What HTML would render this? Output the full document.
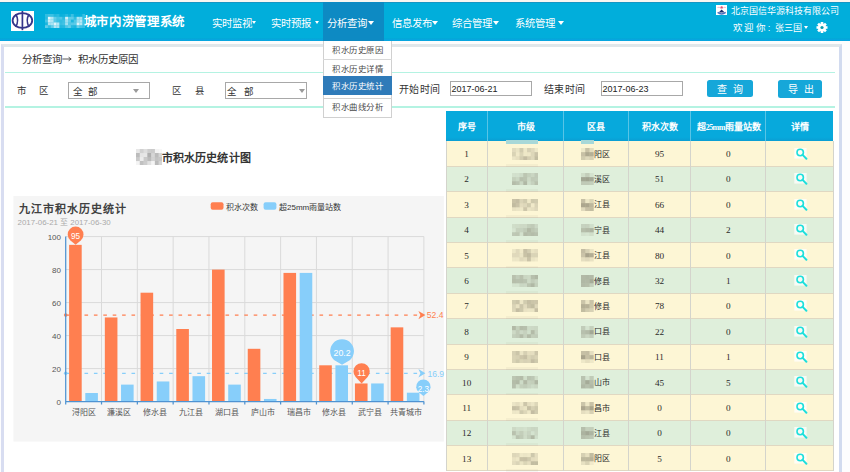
<!DOCTYPE html>
<html lang="zh-CN">
<head>
<meta charset="utf-8">
<style>
*{box-sizing:border-box;margin:0;padding:0}
html,body{width:850px;height:472px;overflow:hidden;background:#fdfdfe;font-family:"Liberation Sans",sans-serif;position:relative}
.a{position:absolute}
#top{left:0;top:0;width:850px;height:2px;background:#f9f6f1}
#hdr{left:0;top:2px;width:850px;height:38.8px;background:linear-gradient(#01aedb 0,#01aedb 34.8px,#03a9d6 35.2px,#07a4e2 37px,#04aad8 38.8px);border-top:1px solid #1596c4}
#logo{left:11px;top:10.8px;width:23px;height:20.1px;background:#fff;overflow:hidden}
.blur{position:absolute}
#ttl{left:45.8px;top:14px;letter-spacing:0.65px;font-size:12.45px;font-weight:bold;color:#fff;line-height:16px;white-space:nowrap}
.nav{position:absolute;top:16.6px;font-size:10.4px;line-height:14px;color:#fff;white-space:nowrap}
.car{display:inline-block;width:0;height:0;border-left:2.5px solid transparent;border-right:2.5px solid transparent;border-top:3px solid #fff;vertical-align:middle;margin-left:0.6px;margin-top:-2px}
.car2{border-left:3px solid transparent;border-right:3px solid transparent;border-top:4px solid #fff}
#act{left:323.2px;top:2px;width:60.4px;height:38.8px;background:#0d8ac3}
#comp{left:731px;top:4.5px;font-size:9px;line-height:12px;color:#fff;white-space:nowrap}
#user{left:732.5px;top:22px;font-size:9.5px;line-height:12px;color:#fff;white-space:nowrap}
#gap{left:0;top:40.8px;width:850px;height:3px;background:#fdfdfd}
#panel{left:1.3px;top:43.6px;width:840.5px;height:440px;background:#fff;border-left:3.7px solid #d8ddf1;border-right:3.7px solid #d2dbef;border-top:3.2px solid #e0e7ea}
#crumb{left:21.5px;top:51.5px;font-size:10.5px;line-height:14px;color:#333;white-space:nowrap}
.hl{position:absolute;height:1.5px;background:#b4f3e2}
.lbl{position:absolute;font-size:10px;line-height:14px;color:#333;white-space:nowrap}
.sel{position:absolute;height:16.4px;border:1px solid #a8a8a8;background:#fff;font-size:9.5px;line-height:17px;color:#333;padding-left:5.5px;letter-spacing:6.2px}
.sel i{position:absolute;right:0.6px;top:5.4px;width:0;height:0;border-left:3px solid transparent;border-right:3px solid transparent;border-top:4.5px solid #9a9a9a}
.inp{position:absolute;height:15px;border:1px solid #a8a8a8;background:#fff;font-size:9px;line-height:14.8px;color:#222;padding-left:0;text-indent:0.4px}
.btn{position:absolute;background:#16a7d9;border-radius:2.5px;color:#fff;font-size:10px;text-align:center;letter-spacing:6px;text-indent:6px}
#dd{left:323.3px;top:40.6px;width:69.2px;height:77px}
.ddi{position:absolute;left:0;width:69.2px;font-size:8.4px;letter-spacing:0.5px;text-indent:-0.5px;line-height:14px;height:14px;color:#4a4a4a;text-align:center;white-space:nowrap}
.th{position:absolute;color:#fff;font-weight:bold;font-size:9px;padding-top:2px;padding-left:1px;text-align:center;white-space:nowrap;font-family:"Liberation Serif",serif}
.td{position:absolute;color:#2a2a2a;font-size:9.2px;padding-top:0.5px;text-align:center;white-space:nowrap;font-family:"Liberation Serif",serif}
.mz{display:inline-block;height:12px;vertical-align:middle;background:#c9c4b0;opacity:.7;margin-top:-2px}
.mag{display:inline-block;width:12px;height:12px;background:#fff;vertical-align:middle;margin-top:-2px}
.mag svg{display:block}
</style>
</head>
<body>
<div class="a" id="top"></div>
<div class="a" id="hdr"></div>
<div class="a" id="act"></div>
<div class="a" id="logo"><svg style="display:block" width="23" height="20.2" viewBox="0 0 23 20.2"><ellipse cx="11.4" cy="9.5" rx="9.8" ry="7.4" fill="none" stroke="#36368a" stroke-width="1.8"/><path d="M4.6 3Q8.6 9.5 4.6 16M18.2 3Q14.2 9.5 18.2 16" fill="none" stroke="#36368a" stroke-width="1.6"/><path d="M11.4 -0.3V19.2" stroke="#36368a" stroke-width="1.7"/></svg></div>
<svg class="a" style="left:44.8px;top:14px" width="40.18" height="14.00"><rect x="0.00" y="0.00" width="2.91" height="2.84" fill="#ffffff" fill-opacity="0.19"/><rect x="2.87" y="0.00" width="2.91" height="2.84" fill="#ffffff" fill-opacity="0.24"/><rect x="5.74" y="0.00" width="2.91" height="2.84" fill="#ffffff" fill-opacity="0.23"/><rect x="8.61" y="0.00" width="2.91" height="2.84" fill="#ffffff" fill-opacity="0.12"/><rect x="11.48" y="0.00" width="2.91" height="2.84" fill="#ffffff" fill-opacity="0.16"/><rect x="14.35" y="0.00" width="2.91" height="2.84" fill="#ffffff" fill-opacity="0.03"/><rect x="17.22" y="0.00" width="2.91" height="2.84" fill="#ffffff" fill-opacity="0.06"/><rect x="20.09" y="0.00" width="2.91" height="2.84" fill="#ffffff" fill-opacity="0.14"/><rect x="22.96" y="0.00" width="2.91" height="2.84" fill="#ffffff" fill-opacity="0.05"/><rect x="25.83" y="0.00" width="2.91" height="2.84" fill="#ffffff" fill-opacity="0.23"/><rect x="28.70" y="0.00" width="2.91" height="2.84" fill="#ffffff" fill-opacity="0.04"/><rect x="31.57" y="0.00" width="2.91" height="2.84" fill="#ffffff" fill-opacity="0.03"/><rect x="34.44" y="0.00" width="2.91" height="2.84" fill="#ffffff" fill-opacity="0.03"/><rect x="37.31" y="0.00" width="2.91" height="2.84" fill="#ffffff" fill-opacity="0.22"/><rect x="0.00" y="2.80" width="2.91" height="2.84" fill="#ffffff" fill-opacity="0.16"/><rect x="2.87" y="2.80" width="2.91" height="2.84" fill="#ffffff" fill-opacity="0.89"/><rect x="5.74" y="2.80" width="2.91" height="2.84" fill="#ffffff" fill-opacity="0.69"/><rect x="8.61" y="2.80" width="2.91" height="2.84" fill="#ffffff" fill-opacity="0.39"/><rect x="11.48" y="2.80" width="2.91" height="2.84" fill="#ffffff" fill-opacity="0.26"/><rect x="14.35" y="2.80" width="2.91" height="2.84" fill="#ffffff" fill-opacity="0.30"/><rect x="17.22" y="2.80" width="2.91" height="2.84" fill="#ffffff" fill-opacity="0.16"/><rect x="20.09" y="2.80" width="2.91" height="2.84" fill="#ffffff" fill-opacity="0.81"/><rect x="22.96" y="2.80" width="2.91" height="2.84" fill="#ffffff" fill-opacity="0.39"/><rect x="25.83" y="2.80" width="2.91" height="2.84" fill="#ffffff" fill-opacity="0.37"/><rect x="28.70" y="2.80" width="2.91" height="2.84" fill="#ffffff" fill-opacity="0.19"/><rect x="31.57" y="2.80" width="2.91" height="2.84" fill="#ffffff" fill-opacity="0.65"/><rect x="34.44" y="2.80" width="2.91" height="2.84" fill="#ffffff" fill-opacity="0.62"/><rect x="37.31" y="2.80" width="2.91" height="2.84" fill="#ffffff" fill-opacity="0.19"/><rect x="0.00" y="5.60" width="2.91" height="2.84" fill="#ffffff" fill-opacity="0.28"/><rect x="2.87" y="5.60" width="2.91" height="2.84" fill="#ffffff" fill-opacity="0.80"/><rect x="5.74" y="5.60" width="2.91" height="2.84" fill="#ffffff" fill-opacity="0.69"/><rect x="8.61" y="5.60" width="2.91" height="2.84" fill="#ffffff" fill-opacity="0.35"/><rect x="11.48" y="5.60" width="2.91" height="2.84" fill="#ffffff" fill-opacity="0.24"/><rect x="14.35" y="5.60" width="2.91" height="2.84" fill="#ffffff" fill-opacity="0.19"/><rect x="17.22" y="5.60" width="2.91" height="2.84" fill="#ffffff" fill-opacity="0.24"/><rect x="20.09" y="5.60" width="2.91" height="2.84" fill="#ffffff" fill-opacity="0.62"/><rect x="22.96" y="5.60" width="2.91" height="2.84" fill="#ffffff" fill-opacity="0.39"/><rect x="25.83" y="5.60" width="2.91" height="2.84" fill="#ffffff" fill-opacity="0.11"/><rect x="28.70" y="5.60" width="2.91" height="2.84" fill="#ffffff" fill-opacity="0.32"/><rect x="31.57" y="5.60" width="2.91" height="2.84" fill="#ffffff" fill-opacity="0.61"/><rect x="34.44" y="5.60" width="2.91" height="2.84" fill="#ffffff" fill-opacity="0.71"/><rect x="37.31" y="5.60" width="2.91" height="2.84" fill="#ffffff" fill-opacity="0.27"/><rect x="0.00" y="8.40" width="2.91" height="2.84" fill="#ffffff" fill-opacity="0.10"/><rect x="2.87" y="8.40" width="2.91" height="2.84" fill="#ffffff" fill-opacity="0.65"/><rect x="5.74" y="8.40" width="2.91" height="2.84" fill="#ffffff" fill-opacity="0.66"/><rect x="8.61" y="8.40" width="2.91" height="2.84" fill="#ffffff" fill-opacity="0.88"/><rect x="11.48" y="8.40" width="2.91" height="2.84" fill="#ffffff" fill-opacity="0.70"/><rect x="14.35" y="8.40" width="2.91" height="2.84" fill="#ffffff" fill-opacity="0.21"/><rect x="17.22" y="8.40" width="2.91" height="2.84" fill="#ffffff" fill-opacity="0.26"/><rect x="20.09" y="8.40" width="2.91" height="2.84" fill="#ffffff" fill-opacity="0.63"/><rect x="22.96" y="8.40" width="2.91" height="2.84" fill="#ffffff" fill-opacity="0.32"/><rect x="25.83" y="8.40" width="2.91" height="2.84" fill="#ffffff" fill-opacity="0.34"/><rect x="28.70" y="8.40" width="2.91" height="2.84" fill="#ffffff" fill-opacity="0.36"/><rect x="31.57" y="8.40" width="2.91" height="2.84" fill="#ffffff" fill-opacity="0.88"/><rect x="34.44" y="8.40" width="2.91" height="2.84" fill="#ffffff" fill-opacity="0.70"/><rect x="37.31" y="8.40" width="2.91" height="2.84" fill="#ffffff" fill-opacity="0.28"/><rect x="0.00" y="11.20" width="2.91" height="2.84" fill="#ffffff" fill-opacity="0.38"/><rect x="2.87" y="11.20" width="2.91" height="2.84" fill="#ffffff" fill-opacity="0.20"/><rect x="5.74" y="11.20" width="2.91" height="2.84" fill="#ffffff" fill-opacity="0.38"/><rect x="8.61" y="11.20" width="2.91" height="2.84" fill="#ffffff" fill-opacity="0.69"/><rect x="11.48" y="11.20" width="2.91" height="2.84" fill="#ffffff" fill-opacity="0.65"/><rect x="14.35" y="11.20" width="2.91" height="2.84" fill="#ffffff" fill-opacity="0.12"/><rect x="17.22" y="11.20" width="2.91" height="2.84" fill="#ffffff" fill-opacity="0.14"/><rect x="20.09" y="11.20" width="2.91" height="2.84" fill="#ffffff" fill-opacity="0.31"/><rect x="22.96" y="11.20" width="2.91" height="2.84" fill="#ffffff" fill-opacity="0.40"/><rect x="25.83" y="11.20" width="2.91" height="2.84" fill="#ffffff" fill-opacity="0.15"/><rect x="28.70" y="11.20" width="2.91" height="2.84" fill="#ffffff" fill-opacity="0.11"/><rect x="31.57" y="11.20" width="2.91" height="2.84" fill="#ffffff" fill-opacity="0.40"/><rect x="34.44" y="11.20" width="2.91" height="2.84" fill="#ffffff" fill-opacity="0.26"/><rect x="37.31" y="11.20" width="2.91" height="2.84" fill="#ffffff" fill-opacity="0.22"/></svg><div class="a" id="ttl" style="left:83.8px">城市内涝管理系统</div>
<div class="nav" style="left:211.6px">实时监视<span class="car"></span></div>
<div class="nav" style="left:271.2px">实时预报 <span class="car"></span></div>
<div class="nav" style="left:327px">分析查询<span class="car car2"></span></div>
<div class="nav" style="left:391.5px">信息发布<span class="car car2"></span></div>
<div class="nav" style="left:452px">综合管理<span class="car car2"></span></div>
<div class="nav" style="left:514.7px">系统管理 <span class="car car2"></span></div>
<div class="a" style="left:715.8px;top:4.9px;width:11.3px;height:10.6px;background:#fff"><svg style="display:block" width="11.3" height="10.6" viewBox="0 0 11.3 10.6"><path d="M1.5 2.5Q3.5 1.5 4.5 3.5M9.8 2.5Q7.8 1.5 6.8 3.5" stroke="#f0b8c8" stroke-width="1" fill="none"/><circle cx="5.65" cy="2.4" r="1.2" fill="#e05070"/><path d="M2.6 7.6L5.65 4.4L8.7 7.6Z" fill="#1a2f6e"/><path d="M1.6 7.4Q5.65 10.6 9.7 7.4" stroke="#4a6fc0" stroke-width="1.4" fill="none"/></svg></div>
<div class="a" id="comp">北京国信华源科技有限公司</div>
<div class="a" id="user"><span style="position:absolute;left:0">欢</span><span style="position:absolute;left:11.6px">迎</span><span style="position:absolute;left:23.2px">你</span><span style="position:absolute;left:35.2px">:</span><span style="position:absolute;left:42.2px;font-size:9px;letter-spacing:0.2px">张三国</span></div><svg class="a" style="left:804px;top:25.6px" width="4" height="3" viewBox="0 0 4 3"><path d="M0 0H4L2 3Z" fill="#fff"/></svg>

<div class="a" style="left:815.6px;top:21.8px"><svg style="display:block" width="12" height="11" viewBox="-6 -5.5 12 11"><circle r="3.9" fill="#fff"/><rect x="-1.3" y="-5.5" width="2.6" height="3" fill="#fff" transform="rotate(0)"/><rect x="-1.3" y="-5.5" width="2.6" height="3" fill="#fff" transform="rotate(45)"/><rect x="-1.3" y="-5.5" width="2.6" height="3" fill="#fff" transform="rotate(90)"/><rect x="-1.3" y="-5.5" width="2.6" height="3" fill="#fff" transform="rotate(135)"/><rect x="-1.3" y="-5.5" width="2.6" height="3" fill="#fff" transform="rotate(180)"/><rect x="-1.3" y="-5.5" width="2.6" height="3" fill="#fff" transform="rotate(225)"/><rect x="-1.3" y="-5.5" width="2.6" height="3" fill="#fff" transform="rotate(270)"/><rect x="-1.3" y="-5.5" width="2.6" height="3" fill="#fff" transform="rotate(315)"/><circle r="1.6" fill="#0a9cae"/></svg></div>
<div class="a" id="gap"></div>
<div class="a" id="panel"></div>
<div class="a" id="crumb">分析查询</div><svg class="a" style="left:62px;top:56px" width="10" height="6" viewBox="0 0 10 6"><path d="M0.3 3H8.6" stroke="#444" stroke-width="0.9"/><path d="M6.6 1.2L9.2 3L6.6 4.8" stroke="#444" stroke-width="0.9" fill="none"/></svg><div class="a" id="crumb" style="left:77.5px">积水历史原因</div>
<div class="hl" style="left:5px;top:71.8px;width:830px"></div>
<div class="lbl" style="left:17.4px;top:84.3px;font-size:9.4px;letter-spacing:13px">市区</div>
<div class="sel" style="left:68px;top:82.4px;width:82px;padding-left:4.3px;letter-spacing:5px">全部<i style="right:10.5px"></i></div>
<div class="lbl" style="left:172.4px;top:84.3px;font-size:9.4px;letter-spacing:14px">区县</div>
<div class="sel" style="left:225px;top:82.4px;width:82px;padding-left:1.4px;letter-spacing:7px">全部<i></i></div>
<div class="lbl" style="left:399px;top:82.5px;letter-spacing:0.4px">开始时间</div>
<div class="inp" style="left:450px;top:81.4px;width:82px">2017-06-21</div>
<div class="lbl" style="left:543.8px;top:82.5px;letter-spacing:0.4px">结束时间</div>
<div class="inp" style="left:601px;top:81.4px;width:82px">2017-06-23</div>
<div class="btn" style="left:706.6px;top:80.3px;width:46px;height:16.8px;line-height:19px">查询</div>
<div class="btn" style="left:778px;top:79.7px;width:44.4px;height:18.2px;line-height:20px;text-indent:7px">导出</div>
<div class="hl" style="left:5px;top:106.35px;width:830px"></div>

<svg class="a" style="left:0;top:0" width="850" height="472" viewBox="0 0 850 472">
<rect x="13.4" y="196" width="430.5" height="245.6" fill="#f5f5f5"/>
<text x="18.5" y="213" font-size="11" font-weight="bold" fill="#404040" letter-spacing="1.1">九江市积水历史统计</text>
<text x="17.6" y="225.2" font-size="7.9" fill="#aaa">2017-06-21 至 2017-06-30</text>
<rect x="210.7" y="202.2" width="12.8" height="7.6" rx="2" fill="#ff7f50"/>
<text x="226.4" y="209.6" font-size="8" fill="#333">积水次数</text>
<rect x="263.6" y="202.2" width="12.8" height="7.6" rx="2" fill="#87cefa"/>
<text x="279" y="209.6" font-size="8" fill="#333">超25mm雨量站数</text>
<path d="M65.7 368.60H423.9 M65.7 335.60H423.9 M65.7 302.60H423.9 M65.7 269.60H423.9 M65.7 236.60H423.9 M101.52 236.60000000000002V401.6 M137.34 236.60000000000002V401.6 M173.16 236.60000000000002V401.6 M208.98 236.60000000000002V401.6 M244.80 236.60000000000002V401.6 M280.62 236.60000000000002V401.6 M316.44 236.60000000000002V401.6 M352.26 236.60000000000002V401.6 M388.08 236.60000000000002V401.6 M423.90 236.60000000000002V401.6" stroke="#dadada" stroke-width="1" fill="none"/>
<text x="61" y="404.60" font-size="8" fill="#555" text-anchor="end">0</text>
<text x="61" y="371.60" font-size="8" fill="#555" text-anchor="end">20</text>
<text x="61" y="338.60" font-size="8" fill="#555" text-anchor="end">40</text>
<text x="61" y="305.60" font-size="8" fill="#555" text-anchor="end">60</text>
<text x="61" y="272.60" font-size="8" fill="#555" text-anchor="end">80</text>
<text x="61" y="239.60" font-size="8" fill="#555" text-anchor="end">100</text>
<path d="M65.7 315.1H418.9" stroke="#ff7f50" stroke-width="1.2" stroke-dasharray="3.6 5.8" fill="none"/>
<path d="M65.7 373.3H418.9" stroke="#87cefa" stroke-width="1.2" stroke-dasharray="3.6 5.8" fill="none"/>
<circle cx="65.7" cy="315.1" r="1.8" fill="#ff7f50"/><circle cx="65.7" cy="373.3" r="1.8" fill="#87cefa"/>
<path d="M418.4 310.9L425.4 315.1L418.4 319.3L420.4 315.1Z" fill="#ff7f50"/>
<path d="M418.4 369.1L425.4 373.3L418.4 377.5L420.4 373.3Z" fill="#87cefa"/>
<text x="426.8" y="318.3" font-size="8.6" fill="#ff7f50">52.4</text>
<text x="427.4" y="376.5" font-size="8.6" fill="#87cefa">16.9</text>
<rect x="69.10" y="244.85" width="12.6" height="156.75" fill="#ff7f50"/>
<rect x="85.30" y="393.02" width="12.6" height="8.58" fill="#87cefa"/>
<text x="83.61" y="414.8" font-size="8" fill="#555" text-anchor="middle">浔阳区</text>
<rect x="104.83" y="317.45" width="12.6" height="84.15" fill="#ff7f50"/>
<rect x="121.03" y="384.61" width="12.6" height="17.00" fill="#87cefa"/>
<text x="119.43" y="414.8" font-size="8" fill="#555" text-anchor="middle">濂溪区</text>
<rect x="140.56" y="292.70" width="12.6" height="108.90" fill="#ff7f50"/>
<rect x="156.76" y="381.47" width="12.6" height="20.13" fill="#87cefa"/>
<text x="155.25" y="414.8" font-size="8" fill="#555" text-anchor="middle">修水县</text>
<rect x="176.29" y="329.00" width="12.6" height="72.60" fill="#ff7f50"/>
<rect x="192.49" y="376.19" width="12.6" height="25.41" fill="#87cefa"/>
<text x="191.07" y="414.8" font-size="8" fill="#555" text-anchor="middle">九江县</text>
<rect x="212.02" y="269.60" width="12.6" height="132.00" fill="#ff7f50"/>
<rect x="228.22" y="384.61" width="12.6" height="17.00" fill="#87cefa"/>
<text x="226.89" y="414.8" font-size="8" fill="#555" text-anchor="middle">湖口县</text>
<rect x="247.75" y="348.80" width="12.6" height="52.80" fill="#ff7f50"/>
<rect x="263.95" y="398.96" width="12.6" height="2.64" fill="#87cefa"/>
<text x="262.71" y="414.8" font-size="8" fill="#555" text-anchor="middle">庐山市</text>
<rect x="283.48" y="272.90" width="12.6" height="128.70" fill="#ff7f50"/>
<rect x="299.68" y="272.90" width="12.6" height="128.70" fill="#87cefa"/>
<text x="298.53" y="414.8" font-size="8" fill="#555" text-anchor="middle">瑞昌市</text>
<rect x="319.21" y="365.30" width="12.6" height="36.30" fill="#ff7f50"/>
<rect x="335.41" y="365.30" width="12.6" height="36.30" fill="#87cefa"/>
<text x="334.35" y="414.8" font-size="8" fill="#555" text-anchor="middle">修水县</text>
<rect x="354.94" y="383.45" width="12.6" height="18.15" fill="#ff7f50"/>
<rect x="371.14" y="383.45" width="12.6" height="18.15" fill="#87cefa"/>
<text x="370.17" y="414.8" font-size="8" fill="#555" text-anchor="middle">武宁县</text>
<rect x="390.67" y="327.35" width="12.6" height="74.25" fill="#ff7f50"/>
<rect x="406.87" y="392.69" width="12.6" height="8.91" fill="#87cefa"/>
<text x="405.99" y="414.8" font-size="8" fill="#555" text-anchor="middle">共青城市</text>
<path d="M65.7 236.60000000000002V401.6H423.9 M65.70 401.6v3 M101.52 401.6v3 M137.34 401.6v3 M173.16 401.6v3 M208.98 401.6v3 M244.80 401.6v3 M280.62 401.6v3 M316.44 401.6v3 M352.26 401.6v3 M388.08 401.6v3 M423.90 401.6v3" stroke="#4f93d2" stroke-width="1.25" fill="none"/>
<path d="M70.46 240.40A7.9 7.9 0 1 1 80.74 240.40L75.6 244.8Z" fill="#ff7f50"/><text x="75.6" y="239.35" font-size="8.2" fill="#fff" text-anchor="middle">95</text>
<path d="M336.10 361.35A11.85 11.85 0 1 1 348.00 361.35L342.05 364.8Z" fill="#87cefa"/><text x="342.05" y="356.27" font-size="8.8" fill="#fff" text-anchor="middle">20.2</text>
<path d="M355.62 376.94A8.15 8.15 0 1 1 367.58 376.94L361.6 383.4Z" fill="#ff7f50"/><text x="361.6" y="376.35" font-size="8.2" fill="#fff" text-anchor="middle">11</text>
<path d="M418.84 392.27A7.2 7.2 0 1 1 427.96 392.27L423.4 396Z" fill="#87cefa"/><text x="423.4" y="391.65" font-size="8.2" fill="#fff" text-anchor="middle">2.3</text>
</svg>
<svg class="a" style="left:136px;top:148.5px" width="26.39" height="16.00"><rect x="0.00" y="0.00" width="3.81" height="4.04" fill="#707070" fill-opacity="0.17"/><rect x="3.77" y="0.00" width="3.81" height="4.04" fill="#707070" fill-opacity="0.32"/><rect x="7.54" y="0.00" width="3.81" height="4.04" fill="#707070" fill-opacity="0.23"/><rect x="11.31" y="0.00" width="3.81" height="4.04" fill="#707070" fill-opacity="0.35"/><rect x="15.08" y="0.00" width="3.81" height="4.04" fill="#707070" fill-opacity="0.36"/><rect x="18.85" y="0.00" width="3.81" height="4.04" fill="#707070" fill-opacity="0.08"/><rect x="22.62" y="0.00" width="3.81" height="4.04" fill="#707070" fill-opacity="0.06"/><rect x="0.00" y="4.00" width="3.81" height="4.04" fill="#707070" fill-opacity="0.47"/><rect x="3.77" y="4.00" width="3.81" height="4.04" fill="#707070" fill-opacity="0.18"/><rect x="7.54" y="4.00" width="3.81" height="4.04" fill="#707070" fill-opacity="0.17"/><rect x="11.31" y="4.00" width="3.81" height="4.04" fill="#707070" fill-opacity="0.55"/><rect x="15.08" y="4.00" width="3.81" height="4.04" fill="#707070" fill-opacity="0.29"/><rect x="18.85" y="4.00" width="3.81" height="4.04" fill="#707070" fill-opacity="0.47"/><rect x="22.62" y="4.00" width="3.81" height="4.04" fill="#707070" fill-opacity="0.29"/><rect x="0.00" y="8.00" width="3.81" height="4.04" fill="#707070" fill-opacity="0.37"/><rect x="3.77" y="8.00" width="3.81" height="4.04" fill="#707070" fill-opacity="0.13"/><rect x="7.54" y="8.00" width="3.81" height="4.04" fill="#707070" fill-opacity="0.37"/><rect x="11.31" y="8.00" width="3.81" height="4.04" fill="#707070" fill-opacity="0.48"/><rect x="15.08" y="8.00" width="3.81" height="4.04" fill="#707070" fill-opacity="0.31"/><rect x="18.85" y="8.00" width="3.81" height="4.04" fill="#707070" fill-opacity="0.42"/><rect x="22.62" y="8.00" width="3.81" height="4.04" fill="#707070" fill-opacity="0.39"/><rect x="0.00" y="12.00" width="3.81" height="4.04" fill="#707070" fill-opacity="0.08"/><rect x="3.77" y="12.00" width="3.81" height="4.04" fill="#707070" fill-opacity="0.43"/><rect x="7.54" y="12.00" width="3.81" height="4.04" fill="#707070" fill-opacity="0.35"/><rect x="11.31" y="12.00" width="3.81" height="4.04" fill="#707070" fill-opacity="0.20"/><rect x="15.08" y="12.00" width="3.81" height="4.04" fill="#707070" fill-opacity="0.07"/><rect x="18.85" y="12.00" width="3.81" height="4.04" fill="#707070" fill-opacity="0.48"/><rect x="22.62" y="12.00" width="3.81" height="4.04" fill="#707070" fill-opacity="0.29"/></svg><div class="a" style="left:162px;top:151px;font-size:11px;line-height:15px;font-weight:bold;color:#333;white-space:nowrap;letter-spacing:0.1px">市积水历史统计图</div>
<div class="a" style="left:446px;top:111.1px;width:387.3px;height:29.5px;background:linear-gradient(#07a9dc 0,#07a9dc 26.2px,#0a9fd4 29.5px)"></div>
<div class="th" style="left:446px;top:111.1px;width:41.3px;height:29.5px;line-height:29.5px">序号</div>
<div class="th" style="left:487.3px;top:111.1px;width:76.1px;height:29.5px;line-height:29.5px">市级</div>
<div class="th" style="left:563.4px;top:111.1px;width:64.8px;height:29.5px;line-height:29.5px">区县</div>
<div class="th" style="left:628.2px;top:111.1px;width:62.7px;height:29.5px;line-height:29.5px">积水次数</div>
<div class="th" style="left:690.9px;top:111.1px;width:74.7px;height:29.5px;line-height:29.5px">超<span style="font-size:8px;letter-spacing:-0.6px">25mm</span>雨量站数</div>
<div class="th" style="left:765.6px;top:111.1px;width:67.7px;height:29.5px;line-height:29.5px">详情</div>
<div class="a" style="left:486.8px;top:111.1px;width:1px;height:29.5px;background:#58c4e6"></div>
<div class="a" style="left:562.9px;top:111.1px;width:1px;height:29.5px;background:#58c4e6"></div>
<div class="a" style="left:627.7px;top:111.1px;width:1px;height:29.5px;background:#58c4e6"></div>
<div class="a" style="left:690.4px;top:111.1px;width:1px;height:29.5px;background:#58c4e6"></div>
<div class="a" style="left:765.1px;top:111.1px;width:1px;height:29.5px;background:#58c4e6"></div>
<div class="a" style="left:446px;top:140.60px;width:387.3px;height:26.20px;background:#fdf6d5;border-bottom:1px solid #e0d8c2"></div>
<div class="td" style="left:446px;top:141.40px;width:41.3px;height:25.4px;line-height:25.4px">1</div>
<svg class="a" style="left:511.8px;top:147.70px" width="26.32" height="12.39"><rect x="0.00" y="0.00" width="3.81" height="4.18" fill="#6e6a58" fill-opacity="0.19"/><rect x="3.76" y="0.00" width="3.81" height="4.18" fill="#6e6a58" fill-opacity="0.13"/><rect x="7.52" y="0.00" width="3.81" height="4.18" fill="#6e6a58" fill-opacity="0.30"/><rect x="11.28" y="0.00" width="3.81" height="4.18" fill="#6e6a58" fill-opacity="0.10"/><rect x="15.04" y="0.00" width="3.81" height="4.18" fill="#6e6a58" fill-opacity="0.26"/><rect x="18.80" y="0.00" width="3.81" height="4.18" fill="#6e6a58" fill-opacity="0.20"/><rect x="22.56" y="0.00" width="3.81" height="4.18" fill="#6e6a58" fill-opacity="0.10"/><rect x="0.00" y="4.13" width="3.81" height="4.18" fill="#6e6a58" fill-opacity="0.25"/><rect x="3.76" y="4.13" width="3.81" height="4.18" fill="#6e6a58" fill-opacity="0.09"/><rect x="7.52" y="4.13" width="3.81" height="4.18" fill="#6e6a58" fill-opacity="0.23"/><rect x="11.28" y="4.13" width="3.81" height="4.18" fill="#6e6a58" fill-opacity="0.10"/><rect x="15.04" y="4.13" width="3.81" height="4.18" fill="#6e6a58" fill-opacity="0.11"/><rect x="18.80" y="4.13" width="3.81" height="4.18" fill="#6e6a58" fill-opacity="0.22"/><rect x="22.56" y="4.13" width="3.81" height="4.18" fill="#6e6a58" fill-opacity="0.36"/><rect x="0.00" y="8.26" width="3.81" height="4.18" fill="#6e6a58" fill-opacity="0.12"/><rect x="3.76" y="8.26" width="3.81" height="4.18" fill="#6e6a58" fill-opacity="0.16"/><rect x="7.52" y="8.26" width="3.81" height="4.18" fill="#6e6a58" fill-opacity="0.29"/><rect x="11.28" y="8.26" width="3.81" height="4.18" fill="#6e6a58" fill-opacity="0.40"/><rect x="15.04" y="8.26" width="3.81" height="4.18" fill="#6e6a58" fill-opacity="0.28"/><rect x="18.80" y="8.26" width="3.81" height="4.18" fill="#6e6a58" fill-opacity="0.21"/><rect x="22.56" y="8.26" width="3.81" height="4.18" fill="#6e6a58" fill-opacity="0.41"/></svg>
<svg class="a" style="left:581.2px;top:147.70px" width="12.69" height="12.39"><rect x="0.00" y="0.00" width="4.28" height="4.18" fill="#6e6a58" fill-opacity="0.10"/><rect x="4.23" y="0.00" width="4.28" height="4.18" fill="#6e6a58" fill-opacity="0.37"/><rect x="8.46" y="0.00" width="4.28" height="4.18" fill="#6e6a58" fill-opacity="0.18"/><rect x="0.00" y="4.13" width="4.28" height="4.18" fill="#6e6a58" fill-opacity="0.38"/><rect x="4.23" y="4.13" width="4.28" height="4.18" fill="#6e6a58" fill-opacity="0.55"/><rect x="8.46" y="4.13" width="4.28" height="4.18" fill="#6e6a58" fill-opacity="0.50"/><rect x="0.00" y="8.26" width="4.28" height="4.18" fill="#6e6a58" fill-opacity="0.30"/><rect x="4.23" y="8.26" width="4.28" height="4.18" fill="#6e6a58" fill-opacity="0.21"/><rect x="8.46" y="8.26" width="4.28" height="4.18" fill="#6e6a58" fill-opacity="0.27"/></svg>
<div class="a" style="left:505.9px;top:164.00px;width:32.2px;height:3.8px;background:#9a9a80;opacity:.08"></div>
<div class="td" style="left:594px;top:141.40px;height:25.4px;line-height:25.4px;font-size:8px;text-align:left;padding-top:0.3px">阳区</div>
<div class="td" style="left:628.2px;top:141.40px;width:62.7px;height:25.4px;line-height:25.4px">95</div>
<div class="td" style="left:690.9px;top:141.40px;width:74.7px;height:25.4px;line-height:25.4px">0</div>
<svg class="a" style="left:793.5px;top:147.80px" width="14" height="12" viewBox="0 0 14 12"><rect x="0.3" y="0" width="12.3" height="10.6" fill="#fff" fill-opacity=".75"/><circle cx="6.2" cy="4.5" r="3.2" fill="none" stroke="#1edfdc" stroke-width="1.6"/><path d="M8.6 6.9L12.4 10.7" stroke="#1edfdc" stroke-width="2" stroke-linecap="round"/></svg>
<div class="a" style="left:446px;top:166.80px;width:387.3px;height:25.40px;background:#dfefdb;border-bottom:1px solid #e0d8c2"></div>
<div class="td" style="left:446px;top:166.80px;width:41.3px;height:25.4px;line-height:25.4px">2</div>
<svg class="a" style="left:511.8px;top:173.10px" width="26.32" height="12.39"><rect x="0.00" y="0.00" width="3.81" height="4.18" fill="#6e6a58" fill-opacity="0.10"/><rect x="3.76" y="0.00" width="3.81" height="4.18" fill="#6e6a58" fill-opacity="0.10"/><rect x="7.52" y="0.00" width="3.81" height="4.18" fill="#6e6a58" fill-opacity="0.15"/><rect x="11.28" y="0.00" width="3.81" height="4.18" fill="#6e6a58" fill-opacity="0.31"/><rect x="15.04" y="0.00" width="3.81" height="4.18" fill="#6e6a58" fill-opacity="0.23"/><rect x="18.80" y="0.00" width="3.81" height="4.18" fill="#6e6a58" fill-opacity="0.19"/><rect x="22.56" y="0.00" width="3.81" height="4.18" fill="#6e6a58" fill-opacity="0.28"/><rect x="0.00" y="4.13" width="3.81" height="4.18" fill="#6e6a58" fill-opacity="0.23"/><rect x="3.76" y="4.13" width="3.81" height="4.18" fill="#6e6a58" fill-opacity="0.18"/><rect x="7.52" y="4.13" width="3.81" height="4.18" fill="#6e6a58" fill-opacity="0.35"/><rect x="11.28" y="4.13" width="3.81" height="4.18" fill="#6e6a58" fill-opacity="0.32"/><rect x="15.04" y="4.13" width="3.81" height="4.18" fill="#6e6a58" fill-opacity="0.16"/><rect x="18.80" y="4.13" width="3.81" height="4.18" fill="#6e6a58" fill-opacity="0.28"/><rect x="22.56" y="4.13" width="3.81" height="4.18" fill="#6e6a58" fill-opacity="0.26"/><rect x="0.00" y="8.26" width="3.81" height="4.18" fill="#6e6a58" fill-opacity="0.38"/><rect x="3.76" y="8.26" width="3.81" height="4.18" fill="#6e6a58" fill-opacity="0.33"/><rect x="7.52" y="8.26" width="3.81" height="4.18" fill="#6e6a58" fill-opacity="0.18"/><rect x="11.28" y="8.26" width="3.81" height="4.18" fill="#6e6a58" fill-opacity="0.41"/><rect x="15.04" y="8.26" width="3.81" height="4.18" fill="#6e6a58" fill-opacity="0.12"/><rect x="18.80" y="8.26" width="3.81" height="4.18" fill="#6e6a58" fill-opacity="0.22"/><rect x="22.56" y="8.26" width="3.81" height="4.18" fill="#6e6a58" fill-opacity="0.34"/></svg>
<svg class="a" style="left:581.2px;top:173.10px" width="12.69" height="12.39"><rect x="0.00" y="0.00" width="4.28" height="4.18" fill="#6e6a58" fill-opacity="0.13"/><rect x="4.23" y="0.00" width="4.28" height="4.18" fill="#6e6a58" fill-opacity="0.25"/><rect x="8.46" y="0.00" width="4.28" height="4.18" fill="#6e6a58" fill-opacity="0.09"/><rect x="0.00" y="4.13" width="4.28" height="4.18" fill="#6e6a58" fill-opacity="0.54"/><rect x="4.23" y="4.13" width="4.28" height="4.18" fill="#6e6a58" fill-opacity="0.57"/><rect x="8.46" y="4.13" width="4.28" height="4.18" fill="#6e6a58" fill-opacity="0.52"/><rect x="0.00" y="8.26" width="4.28" height="4.18" fill="#6e6a58" fill-opacity="0.28"/><rect x="4.23" y="8.26" width="4.28" height="4.18" fill="#6e6a58" fill-opacity="0.28"/><rect x="8.46" y="8.26" width="4.28" height="4.18" fill="#6e6a58" fill-opacity="0.24"/></svg>
<div class="a" style="left:505.9px;top:189.40px;width:32.2px;height:3.8px;background:#9a9a80;opacity:.08"></div>
<div class="td" style="left:594px;top:166.80px;height:25.4px;line-height:25.4px;font-size:8px;text-align:left;padding-top:0.3px">溪区</div>
<div class="td" style="left:628.2px;top:166.80px;width:62.7px;height:25.4px;line-height:25.4px">51</div>
<div class="td" style="left:690.9px;top:166.80px;width:74.7px;height:25.4px;line-height:25.4px">0</div>
<svg class="a" style="left:793.5px;top:173.20px" width="14" height="12" viewBox="0 0 14 12"><rect x="0.3" y="0" width="12.3" height="10.6" fill="#fff" fill-opacity=".75"/><circle cx="6.2" cy="4.5" r="3.2" fill="none" stroke="#1edfdc" stroke-width="1.6"/><path d="M8.6 6.9L12.4 10.7" stroke="#1edfdc" stroke-width="2" stroke-linecap="round"/></svg>
<div class="a" style="left:446px;top:192.20px;width:387.3px;height:25.40px;background:#fdf6d5;border-bottom:1px solid #e0d8c2"></div>
<div class="td" style="left:446px;top:192.20px;width:41.3px;height:25.4px;line-height:25.4px">3</div>
<svg class="a" style="left:511.8px;top:198.50px" width="26.32" height="12.39"><rect x="0.00" y="0.00" width="3.81" height="4.18" fill="#6e6a58" fill-opacity="0.37"/><rect x="3.76" y="0.00" width="3.81" height="4.18" fill="#6e6a58" fill-opacity="0.40"/><rect x="7.52" y="0.00" width="3.81" height="4.18" fill="#6e6a58" fill-opacity="0.24"/><rect x="11.28" y="0.00" width="3.81" height="4.18" fill="#6e6a58" fill-opacity="0.31"/><rect x="15.04" y="0.00" width="3.81" height="4.18" fill="#6e6a58" fill-opacity="0.10"/><rect x="18.80" y="0.00" width="3.81" height="4.18" fill="#6e6a58" fill-opacity="0.32"/><rect x="22.56" y="0.00" width="3.81" height="4.18" fill="#6e6a58" fill-opacity="0.30"/><rect x="0.00" y="4.13" width="3.81" height="4.18" fill="#6e6a58" fill-opacity="0.42"/><rect x="3.76" y="4.13" width="3.81" height="4.18" fill="#6e6a58" fill-opacity="0.36"/><rect x="7.52" y="4.13" width="3.81" height="4.18" fill="#6e6a58" fill-opacity="0.18"/><rect x="11.28" y="4.13" width="3.81" height="4.18" fill="#6e6a58" fill-opacity="0.21"/><rect x="15.04" y="4.13" width="3.81" height="4.18" fill="#6e6a58" fill-opacity="0.31"/><rect x="18.80" y="4.13" width="3.81" height="4.18" fill="#6e6a58" fill-opacity="0.09"/><rect x="22.56" y="4.13" width="3.81" height="4.18" fill="#6e6a58" fill-opacity="0.24"/><rect x="0.00" y="8.26" width="3.81" height="4.18" fill="#6e6a58" fill-opacity="0.14"/><rect x="3.76" y="8.26" width="3.81" height="4.18" fill="#6e6a58" fill-opacity="0.12"/><rect x="7.52" y="8.26" width="3.81" height="4.18" fill="#6e6a58" fill-opacity="0.10"/><rect x="11.28" y="8.26" width="3.81" height="4.18" fill="#6e6a58" fill-opacity="0.34"/><rect x="15.04" y="8.26" width="3.81" height="4.18" fill="#6e6a58" fill-opacity="0.12"/><rect x="18.80" y="8.26" width="3.81" height="4.18" fill="#6e6a58" fill-opacity="0.16"/><rect x="22.56" y="8.26" width="3.81" height="4.18" fill="#6e6a58" fill-opacity="0.21"/></svg>
<svg class="a" style="left:581.2px;top:198.50px" width="12.69" height="12.39"><rect x="0.00" y="0.00" width="4.28" height="4.18" fill="#6e6a58" fill-opacity="0.38"/><rect x="4.23" y="0.00" width="4.28" height="4.18" fill="#6e6a58" fill-opacity="0.11"/><rect x="8.46" y="0.00" width="4.28" height="4.18" fill="#6e6a58" fill-opacity="0.23"/><rect x="0.00" y="4.13" width="4.28" height="4.18" fill="#6e6a58" fill-opacity="0.57"/><rect x="4.23" y="4.13" width="4.28" height="4.18" fill="#6e6a58" fill-opacity="0.57"/><rect x="8.46" y="4.13" width="4.28" height="4.18" fill="#6e6a58" fill-opacity="0.45"/><rect x="0.00" y="8.26" width="4.28" height="4.18" fill="#6e6a58" fill-opacity="0.20"/><rect x="4.23" y="8.26" width="4.28" height="4.18" fill="#6e6a58" fill-opacity="0.38"/><rect x="8.46" y="8.26" width="4.28" height="4.18" fill="#6e6a58" fill-opacity="0.41"/></svg>
<div class="a" style="left:505.9px;top:214.80px;width:32.2px;height:3.8px;background:#9a9a80;opacity:.08"></div>
<div class="td" style="left:594px;top:192.20px;height:25.4px;line-height:25.4px;font-size:8px;text-align:left;padding-top:0.3px">江县</div>
<div class="td" style="left:628.2px;top:192.20px;width:62.7px;height:25.4px;line-height:25.4px">66</div>
<div class="td" style="left:690.9px;top:192.20px;width:74.7px;height:25.4px;line-height:25.4px">0</div>
<svg class="a" style="left:793.5px;top:198.60px" width="14" height="12" viewBox="0 0 14 12"><rect x="0.3" y="0" width="12.3" height="10.6" fill="#fff" fill-opacity=".75"/><circle cx="6.2" cy="4.5" r="3.2" fill="none" stroke="#1edfdc" stroke-width="1.6"/><path d="M8.6 6.9L12.4 10.7" stroke="#1edfdc" stroke-width="2" stroke-linecap="round"/></svg>
<div class="a" style="left:446px;top:217.60px;width:387.3px;height:25.40px;background:#dfefdb;border-bottom:1px solid #e0d8c2"></div>
<div class="td" style="left:446px;top:217.60px;width:41.3px;height:25.4px;line-height:25.4px">4</div>
<svg class="a" style="left:511.8px;top:223.90px" width="26.32" height="12.39"><rect x="0.00" y="0.00" width="3.81" height="4.18" fill="#6e6a58" fill-opacity="0.13"/><rect x="3.76" y="0.00" width="3.81" height="4.18" fill="#6e6a58" fill-opacity="0.14"/><rect x="7.52" y="0.00" width="3.81" height="4.18" fill="#6e6a58" fill-opacity="0.16"/><rect x="11.28" y="0.00" width="3.81" height="4.18" fill="#6e6a58" fill-opacity="0.16"/><rect x="15.04" y="0.00" width="3.81" height="4.18" fill="#6e6a58" fill-opacity="0.24"/><rect x="18.80" y="0.00" width="3.81" height="4.18" fill="#6e6a58" fill-opacity="0.28"/><rect x="22.56" y="0.00" width="3.81" height="4.18" fill="#6e6a58" fill-opacity="0.17"/><rect x="0.00" y="4.13" width="3.81" height="4.18" fill="#6e6a58" fill-opacity="0.08"/><rect x="3.76" y="4.13" width="3.81" height="4.18" fill="#6e6a58" fill-opacity="0.22"/><rect x="7.52" y="4.13" width="3.81" height="4.18" fill="#6e6a58" fill-opacity="0.21"/><rect x="11.28" y="4.13" width="3.81" height="4.18" fill="#6e6a58" fill-opacity="0.27"/><rect x="15.04" y="4.13" width="3.81" height="4.18" fill="#6e6a58" fill-opacity="0.40"/><rect x="18.80" y="4.13" width="3.81" height="4.18" fill="#6e6a58" fill-opacity="0.31"/><rect x="22.56" y="4.13" width="3.81" height="4.18" fill="#6e6a58" fill-opacity="0.26"/><rect x="0.00" y="8.26" width="3.81" height="4.18" fill="#6e6a58" fill-opacity="0.29"/><rect x="3.76" y="8.26" width="3.81" height="4.18" fill="#6e6a58" fill-opacity="0.31"/><rect x="7.52" y="8.26" width="3.81" height="4.18" fill="#6e6a58" fill-opacity="0.10"/><rect x="11.28" y="8.26" width="3.81" height="4.18" fill="#6e6a58" fill-opacity="0.39"/><rect x="15.04" y="8.26" width="3.81" height="4.18" fill="#6e6a58" fill-opacity="0.35"/><rect x="18.80" y="8.26" width="3.81" height="4.18" fill="#6e6a58" fill-opacity="0.38"/><rect x="22.56" y="8.26" width="3.81" height="4.18" fill="#6e6a58" fill-opacity="0.35"/></svg>
<svg class="a" style="left:581.2px;top:223.90px" width="12.69" height="12.39"><rect x="0.00" y="0.00" width="4.28" height="4.18" fill="#6e6a58" fill-opacity="0.21"/><rect x="4.23" y="0.00" width="4.28" height="4.18" fill="#6e6a58" fill-opacity="0.22"/><rect x="8.46" y="0.00" width="4.28" height="4.18" fill="#6e6a58" fill-opacity="0.12"/><rect x="0.00" y="4.13" width="4.28" height="4.18" fill="#6e6a58" fill-opacity="0.37"/><rect x="4.23" y="4.13" width="4.28" height="4.18" fill="#6e6a58" fill-opacity="0.40"/><rect x="8.46" y="4.13" width="4.28" height="4.18" fill="#6e6a58" fill-opacity="0.44"/><rect x="0.00" y="8.26" width="4.28" height="4.18" fill="#6e6a58" fill-opacity="0.10"/><rect x="4.23" y="8.26" width="4.28" height="4.18" fill="#6e6a58" fill-opacity="0.08"/><rect x="8.46" y="8.26" width="4.28" height="4.18" fill="#6e6a58" fill-opacity="0.13"/></svg>
<div class="a" style="left:505.9px;top:240.20px;width:32.2px;height:3.8px;background:#9a9a80;opacity:.08"></div>
<div class="td" style="left:594px;top:217.60px;height:25.4px;line-height:25.4px;font-size:8px;text-align:left;padding-top:0.3px">宁县</div>
<div class="td" style="left:628.2px;top:217.60px;width:62.7px;height:25.4px;line-height:25.4px">44</div>
<div class="td" style="left:690.9px;top:217.60px;width:74.7px;height:25.4px;line-height:25.4px">2</div>
<svg class="a" style="left:793.5px;top:224.00px" width="14" height="12" viewBox="0 0 14 12"><rect x="0.3" y="0" width="12.3" height="10.6" fill="#fff" fill-opacity=".75"/><circle cx="6.2" cy="4.5" r="3.2" fill="none" stroke="#1edfdc" stroke-width="1.6"/><path d="M8.6 6.9L12.4 10.7" stroke="#1edfdc" stroke-width="2" stroke-linecap="round"/></svg>
<div class="a" style="left:446px;top:243.00px;width:387.3px;height:25.40px;background:#fdf6d5;border-bottom:1px solid #e0d8c2"></div>
<div class="td" style="left:446px;top:243.00px;width:41.3px;height:25.4px;line-height:25.4px">5</div>
<svg class="a" style="left:511.8px;top:249.30px" width="26.32" height="12.39"><rect x="0.00" y="0.00" width="3.81" height="4.18" fill="#6e6a58" fill-opacity="0.11"/><rect x="3.76" y="0.00" width="3.81" height="4.18" fill="#6e6a58" fill-opacity="0.20"/><rect x="7.52" y="0.00" width="3.81" height="4.18" fill="#6e6a58" fill-opacity="0.09"/><rect x="11.28" y="0.00" width="3.81" height="4.18" fill="#6e6a58" fill-opacity="0.38"/><rect x="15.04" y="0.00" width="3.81" height="4.18" fill="#6e6a58" fill-opacity="0.29"/><rect x="18.80" y="0.00" width="3.81" height="4.18" fill="#6e6a58" fill-opacity="0.13"/><rect x="22.56" y="0.00" width="3.81" height="4.18" fill="#6e6a58" fill-opacity="0.17"/><rect x="0.00" y="4.13" width="3.81" height="4.18" fill="#6e6a58" fill-opacity="0.20"/><rect x="3.76" y="4.13" width="3.81" height="4.18" fill="#6e6a58" fill-opacity="0.20"/><rect x="7.52" y="4.13" width="3.81" height="4.18" fill="#6e6a58" fill-opacity="0.12"/><rect x="11.28" y="4.13" width="3.81" height="4.18" fill="#6e6a58" fill-opacity="0.37"/><rect x="15.04" y="4.13" width="3.81" height="4.18" fill="#6e6a58" fill-opacity="0.42"/><rect x="18.80" y="4.13" width="3.81" height="4.18" fill="#6e6a58" fill-opacity="0.24"/><rect x="22.56" y="4.13" width="3.81" height="4.18" fill="#6e6a58" fill-opacity="0.24"/><rect x="0.00" y="8.26" width="3.81" height="4.18" fill="#6e6a58" fill-opacity="0.11"/><rect x="3.76" y="8.26" width="3.81" height="4.18" fill="#6e6a58" fill-opacity="0.11"/><rect x="7.52" y="8.26" width="3.81" height="4.18" fill="#6e6a58" fill-opacity="0.20"/><rect x="11.28" y="8.26" width="3.81" height="4.18" fill="#6e6a58" fill-opacity="0.17"/><rect x="15.04" y="8.26" width="3.81" height="4.18" fill="#6e6a58" fill-opacity="0.36"/><rect x="18.80" y="8.26" width="3.81" height="4.18" fill="#6e6a58" fill-opacity="0.13"/><rect x="22.56" y="8.26" width="3.81" height="4.18" fill="#6e6a58" fill-opacity="0.09"/></svg>
<svg class="a" style="left:581.2px;top:249.30px" width="12.69" height="12.39"><rect x="0.00" y="0.00" width="4.28" height="4.18" fill="#6e6a58" fill-opacity="0.40"/><rect x="4.23" y="0.00" width="4.28" height="4.18" fill="#6e6a58" fill-opacity="0.26"/><rect x="8.46" y="0.00" width="4.28" height="4.18" fill="#6e6a58" fill-opacity="0.13"/><rect x="0.00" y="4.13" width="4.28" height="4.18" fill="#6e6a58" fill-opacity="0.36"/><rect x="4.23" y="4.13" width="4.28" height="4.18" fill="#6e6a58" fill-opacity="0.59"/><rect x="8.46" y="4.13" width="4.28" height="4.18" fill="#6e6a58" fill-opacity="0.52"/><rect x="0.00" y="8.26" width="4.28" height="4.18" fill="#6e6a58" fill-opacity="0.17"/><rect x="4.23" y="8.26" width="4.28" height="4.18" fill="#6e6a58" fill-opacity="0.20"/><rect x="8.46" y="8.26" width="4.28" height="4.18" fill="#6e6a58" fill-opacity="0.14"/></svg>
<div class="a" style="left:505.9px;top:265.60px;width:32.2px;height:3.8px;background:#9a9a80;opacity:.08"></div>
<div class="td" style="left:594px;top:243.00px;height:25.4px;line-height:25.4px;font-size:8px;text-align:left;padding-top:0.3px">江县</div>
<div class="td" style="left:628.2px;top:243.00px;width:62.7px;height:25.4px;line-height:25.4px">80</div>
<div class="td" style="left:690.9px;top:243.00px;width:74.7px;height:25.4px;line-height:25.4px">0</div>
<svg class="a" style="left:793.5px;top:249.40px" width="14" height="12" viewBox="0 0 14 12"><rect x="0.3" y="0" width="12.3" height="10.6" fill="#fff" fill-opacity=".75"/><circle cx="6.2" cy="4.5" r="3.2" fill="none" stroke="#1edfdc" stroke-width="1.6"/><path d="M8.6 6.9L12.4 10.7" stroke="#1edfdc" stroke-width="2" stroke-linecap="round"/></svg>
<div class="a" style="left:446px;top:268.40px;width:387.3px;height:25.40px;background:#dfefdb;border-bottom:1px solid #e0d8c2"></div>
<div class="td" style="left:446px;top:268.40px;width:41.3px;height:25.4px;line-height:25.4px">6</div>
<svg class="a" style="left:511.8px;top:274.70px" width="26.32" height="12.39"><rect x="0.00" y="0.00" width="3.81" height="4.18" fill="#6e6a58" fill-opacity="0.34"/><rect x="3.76" y="0.00" width="3.81" height="4.18" fill="#6e6a58" fill-opacity="0.26"/><rect x="7.52" y="0.00" width="3.81" height="4.18" fill="#6e6a58" fill-opacity="0.34"/><rect x="11.28" y="0.00" width="3.81" height="4.18" fill="#6e6a58" fill-opacity="0.19"/><rect x="15.04" y="0.00" width="3.81" height="4.18" fill="#6e6a58" fill-opacity="0.16"/><rect x="18.80" y="0.00" width="3.81" height="4.18" fill="#6e6a58" fill-opacity="0.36"/><rect x="22.56" y="0.00" width="3.81" height="4.18" fill="#6e6a58" fill-opacity="0.41"/><rect x="0.00" y="4.13" width="3.81" height="4.18" fill="#6e6a58" fill-opacity="0.37"/><rect x="3.76" y="4.13" width="3.81" height="4.18" fill="#6e6a58" fill-opacity="0.35"/><rect x="7.52" y="4.13" width="3.81" height="4.18" fill="#6e6a58" fill-opacity="0.36"/><rect x="11.28" y="4.13" width="3.81" height="4.18" fill="#6e6a58" fill-opacity="0.33"/><rect x="15.04" y="4.13" width="3.81" height="4.18" fill="#6e6a58" fill-opacity="0.16"/><rect x="18.80" y="4.13" width="3.81" height="4.18" fill="#6e6a58" fill-opacity="0.26"/><rect x="22.56" y="4.13" width="3.81" height="4.18" fill="#6e6a58" fill-opacity="0.20"/><rect x="0.00" y="8.26" width="3.81" height="4.18" fill="#6e6a58" fill-opacity="0.09"/><rect x="3.76" y="8.26" width="3.81" height="4.18" fill="#6e6a58" fill-opacity="0.09"/><rect x="7.52" y="8.26" width="3.81" height="4.18" fill="#6e6a58" fill-opacity="0.18"/><rect x="11.28" y="8.26" width="3.81" height="4.18" fill="#6e6a58" fill-opacity="0.17"/><rect x="15.04" y="8.26" width="3.81" height="4.18" fill="#6e6a58" fill-opacity="0.32"/><rect x="18.80" y="8.26" width="3.81" height="4.18" fill="#6e6a58" fill-opacity="0.41"/><rect x="22.56" y="8.26" width="3.81" height="4.18" fill="#6e6a58" fill-opacity="0.23"/></svg>
<svg class="a" style="left:581.2px;top:274.70px" width="12.69" height="12.39"><rect x="0.00" y="0.00" width="4.28" height="4.18" fill="#6e6a58" fill-opacity="0.40"/><rect x="4.23" y="0.00" width="4.28" height="4.18" fill="#6e6a58" fill-opacity="0.42"/><rect x="8.46" y="0.00" width="4.28" height="4.18" fill="#6e6a58" fill-opacity="0.40"/><rect x="0.00" y="4.13" width="4.28" height="4.18" fill="#6e6a58" fill-opacity="0.41"/><rect x="4.23" y="4.13" width="4.28" height="4.18" fill="#6e6a58" fill-opacity="0.40"/><rect x="8.46" y="4.13" width="4.28" height="4.18" fill="#6e6a58" fill-opacity="0.51"/><rect x="0.00" y="8.26" width="4.28" height="4.18" fill="#6e6a58" fill-opacity="0.39"/><rect x="4.23" y="8.26" width="4.28" height="4.18" fill="#6e6a58" fill-opacity="0.37"/><rect x="8.46" y="8.26" width="4.28" height="4.18" fill="#6e6a58" fill-opacity="0.24"/></svg>
<div class="a" style="left:505.9px;top:291.00px;width:32.2px;height:3.8px;background:#9a9a80;opacity:.08"></div>
<div class="td" style="left:594px;top:268.40px;height:25.4px;line-height:25.4px;font-size:8px;text-align:left;padding-top:0.3px">修县</div>
<div class="td" style="left:628.2px;top:268.40px;width:62.7px;height:25.4px;line-height:25.4px">32</div>
<div class="td" style="left:690.9px;top:268.40px;width:74.7px;height:25.4px;line-height:25.4px">1</div>
<svg class="a" style="left:793.5px;top:274.80px" width="14" height="12" viewBox="0 0 14 12"><rect x="0.3" y="0" width="12.3" height="10.6" fill="#fff" fill-opacity=".75"/><circle cx="6.2" cy="4.5" r="3.2" fill="none" stroke="#1edfdc" stroke-width="1.6"/><path d="M8.6 6.9L12.4 10.7" stroke="#1edfdc" stroke-width="2" stroke-linecap="round"/></svg>
<div class="a" style="left:446px;top:293.80px;width:387.3px;height:25.40px;background:#fdf6d5;border-bottom:1px solid #e0d8c2"></div>
<div class="td" style="left:446px;top:293.80px;width:41.3px;height:25.4px;line-height:25.4px">7</div>
<svg class="a" style="left:511.8px;top:300.10px" width="26.32" height="12.39"><rect x="0.00" y="0.00" width="3.81" height="4.18" fill="#6e6a58" fill-opacity="0.30"/><rect x="3.76" y="0.00" width="3.81" height="4.18" fill="#6e6a58" fill-opacity="0.35"/><rect x="7.52" y="0.00" width="3.81" height="4.18" fill="#6e6a58" fill-opacity="0.11"/><rect x="11.28" y="0.00" width="3.81" height="4.18" fill="#6e6a58" fill-opacity="0.30"/><rect x="15.04" y="0.00" width="3.81" height="4.18" fill="#6e6a58" fill-opacity="0.39"/><rect x="18.80" y="0.00" width="3.81" height="4.18" fill="#6e6a58" fill-opacity="0.35"/><rect x="22.56" y="0.00" width="3.81" height="4.18" fill="#6e6a58" fill-opacity="0.34"/><rect x="0.00" y="4.13" width="3.81" height="4.18" fill="#6e6a58" fill-opacity="0.24"/><rect x="3.76" y="4.13" width="3.81" height="4.18" fill="#6e6a58" fill-opacity="0.14"/><rect x="7.52" y="4.13" width="3.81" height="4.18" fill="#6e6a58" fill-opacity="0.35"/><rect x="11.28" y="4.13" width="3.81" height="4.18" fill="#6e6a58" fill-opacity="0.19"/><rect x="15.04" y="4.13" width="3.81" height="4.18" fill="#6e6a58" fill-opacity="0.35"/><rect x="18.80" y="4.13" width="3.81" height="4.18" fill="#6e6a58" fill-opacity="0.41"/><rect x="22.56" y="4.13" width="3.81" height="4.18" fill="#6e6a58" fill-opacity="0.21"/><rect x="0.00" y="8.26" width="3.81" height="4.18" fill="#6e6a58" fill-opacity="0.22"/><rect x="3.76" y="8.26" width="3.81" height="4.18" fill="#6e6a58" fill-opacity="0.40"/><rect x="7.52" y="8.26" width="3.81" height="4.18" fill="#6e6a58" fill-opacity="0.33"/><rect x="11.28" y="8.26" width="3.81" height="4.18" fill="#6e6a58" fill-opacity="0.14"/><rect x="15.04" y="8.26" width="3.81" height="4.18" fill="#6e6a58" fill-opacity="0.12"/><rect x="18.80" y="8.26" width="3.81" height="4.18" fill="#6e6a58" fill-opacity="0.13"/><rect x="22.56" y="8.26" width="3.81" height="4.18" fill="#6e6a58" fill-opacity="0.39"/></svg>
<svg class="a" style="left:581.2px;top:300.10px" width="12.69" height="12.39"><rect x="0.00" y="0.00" width="4.28" height="4.18" fill="#6e6a58" fill-opacity="0.35"/><rect x="4.23" y="0.00" width="4.28" height="4.18" fill="#6e6a58" fill-opacity="0.13"/><rect x="8.46" y="0.00" width="4.28" height="4.18" fill="#6e6a58" fill-opacity="0.36"/><rect x="0.00" y="4.13" width="4.28" height="4.18" fill="#6e6a58" fill-opacity="0.51"/><rect x="4.23" y="4.13" width="4.28" height="4.18" fill="#6e6a58" fill-opacity="0.49"/><rect x="8.46" y="4.13" width="4.28" height="4.18" fill="#6e6a58" fill-opacity="0.35"/><rect x="0.00" y="8.26" width="4.28" height="4.18" fill="#6e6a58" fill-opacity="0.41"/><rect x="4.23" y="8.26" width="4.28" height="4.18" fill="#6e6a58" fill-opacity="0.30"/><rect x="8.46" y="8.26" width="4.28" height="4.18" fill="#6e6a58" fill-opacity="0.26"/></svg>
<div class="a" style="left:505.9px;top:316.40px;width:32.2px;height:3.8px;background:#9a9a80;opacity:.08"></div>
<div class="td" style="left:594px;top:293.80px;height:25.4px;line-height:25.4px;font-size:8px;text-align:left;padding-top:0.3px">修县</div>
<div class="td" style="left:628.2px;top:293.80px;width:62.7px;height:25.4px;line-height:25.4px">78</div>
<div class="td" style="left:690.9px;top:293.80px;width:74.7px;height:25.4px;line-height:25.4px">0</div>
<svg class="a" style="left:793.5px;top:300.20px" width="14" height="12" viewBox="0 0 14 12"><rect x="0.3" y="0" width="12.3" height="10.6" fill="#fff" fill-opacity=".75"/><circle cx="6.2" cy="4.5" r="3.2" fill="none" stroke="#1edfdc" stroke-width="1.6"/><path d="M8.6 6.9L12.4 10.7" stroke="#1edfdc" stroke-width="2" stroke-linecap="round"/></svg>
<div class="a" style="left:446px;top:319.20px;width:387.3px;height:25.40px;background:#dfefdb;border-bottom:1px solid #e0d8c2"></div>
<div class="td" style="left:446px;top:319.20px;width:41.3px;height:25.4px;line-height:25.4px">8</div>
<svg class="a" style="left:511.8px;top:325.50px" width="26.32" height="12.39"><rect x="0.00" y="0.00" width="3.81" height="4.18" fill="#6e6a58" fill-opacity="0.40"/><rect x="3.76" y="0.00" width="3.81" height="4.18" fill="#6e6a58" fill-opacity="0.23"/><rect x="7.52" y="0.00" width="3.81" height="4.18" fill="#6e6a58" fill-opacity="0.38"/><rect x="11.28" y="0.00" width="3.81" height="4.18" fill="#6e6a58" fill-opacity="0.36"/><rect x="15.04" y="0.00" width="3.81" height="4.18" fill="#6e6a58" fill-opacity="0.15"/><rect x="18.80" y="0.00" width="3.81" height="4.18" fill="#6e6a58" fill-opacity="0.17"/><rect x="22.56" y="0.00" width="3.81" height="4.18" fill="#6e6a58" fill-opacity="0.18"/><rect x="0.00" y="4.13" width="3.81" height="4.18" fill="#6e6a58" fill-opacity="0.16"/><rect x="3.76" y="4.13" width="3.81" height="4.18" fill="#6e6a58" fill-opacity="0.28"/><rect x="7.52" y="4.13" width="3.81" height="4.18" fill="#6e6a58" fill-opacity="0.17"/><rect x="11.28" y="4.13" width="3.81" height="4.18" fill="#6e6a58" fill-opacity="0.22"/><rect x="15.04" y="4.13" width="3.81" height="4.18" fill="#6e6a58" fill-opacity="0.12"/><rect x="18.80" y="4.13" width="3.81" height="4.18" fill="#6e6a58" fill-opacity="0.39"/><rect x="22.56" y="4.13" width="3.81" height="4.18" fill="#6e6a58" fill-opacity="0.20"/><rect x="0.00" y="8.26" width="3.81" height="4.18" fill="#6e6a58" fill-opacity="0.24"/><rect x="3.76" y="8.26" width="3.81" height="4.18" fill="#6e6a58" fill-opacity="0.28"/><rect x="7.52" y="8.26" width="3.81" height="4.18" fill="#6e6a58" fill-opacity="0.39"/><rect x="11.28" y="8.26" width="3.81" height="4.18" fill="#6e6a58" fill-opacity="0.22"/><rect x="15.04" y="8.26" width="3.81" height="4.18" fill="#6e6a58" fill-opacity="0.39"/><rect x="18.80" y="8.26" width="3.81" height="4.18" fill="#6e6a58" fill-opacity="0.25"/><rect x="22.56" y="8.26" width="3.81" height="4.18" fill="#6e6a58" fill-opacity="0.26"/></svg>
<svg class="a" style="left:581.2px;top:325.50px" width="12.69" height="12.39"><rect x="0.00" y="0.00" width="4.28" height="4.18" fill="#6e6a58" fill-opacity="0.26"/><rect x="4.23" y="0.00" width="4.28" height="4.18" fill="#6e6a58" fill-opacity="0.09"/><rect x="8.46" y="0.00" width="4.28" height="4.18" fill="#6e6a58" fill-opacity="0.23"/><rect x="0.00" y="4.13" width="4.28" height="4.18" fill="#6e6a58" fill-opacity="0.35"/><rect x="4.23" y="4.13" width="4.28" height="4.18" fill="#6e6a58" fill-opacity="0.39"/><rect x="8.46" y="4.13" width="4.28" height="4.18" fill="#6e6a58" fill-opacity="0.53"/><rect x="0.00" y="8.26" width="4.28" height="4.18" fill="#6e6a58" fill-opacity="0.27"/><rect x="4.23" y="8.26" width="4.28" height="4.18" fill="#6e6a58" fill-opacity="0.19"/><rect x="8.46" y="8.26" width="4.28" height="4.18" fill="#6e6a58" fill-opacity="0.26"/></svg>
<div class="a" style="left:505.9px;top:341.80px;width:32.2px;height:3.8px;background:#9a9a80;opacity:.08"></div>
<div class="td" style="left:594px;top:319.20px;height:25.4px;line-height:25.4px;font-size:8px;text-align:left;padding-top:0.3px">口县</div>
<div class="td" style="left:628.2px;top:319.20px;width:62.7px;height:25.4px;line-height:25.4px">22</div>
<div class="td" style="left:690.9px;top:319.20px;width:74.7px;height:25.4px;line-height:25.4px">0</div>
<svg class="a" style="left:793.5px;top:325.60px" width="14" height="12" viewBox="0 0 14 12"><rect x="0.3" y="0" width="12.3" height="10.6" fill="#fff" fill-opacity=".75"/><circle cx="6.2" cy="4.5" r="3.2" fill="none" stroke="#1edfdc" stroke-width="1.6"/><path d="M8.6 6.9L12.4 10.7" stroke="#1edfdc" stroke-width="2" stroke-linecap="round"/></svg>
<div class="a" style="left:446px;top:344.60px;width:387.3px;height:25.40px;background:#fdf6d5;border-bottom:1px solid #e0d8c2"></div>
<div class="td" style="left:446px;top:344.60px;width:41.3px;height:25.4px;line-height:25.4px">9</div>
<svg class="a" style="left:511.8px;top:350.90px" width="26.32" height="12.39"><rect x="0.00" y="0.00" width="3.81" height="4.18" fill="#6e6a58" fill-opacity="0.27"/><rect x="3.76" y="0.00" width="3.81" height="4.18" fill="#6e6a58" fill-opacity="0.35"/><rect x="7.52" y="0.00" width="3.81" height="4.18" fill="#6e6a58" fill-opacity="0.12"/><rect x="11.28" y="0.00" width="3.81" height="4.18" fill="#6e6a58" fill-opacity="0.27"/><rect x="15.04" y="0.00" width="3.81" height="4.18" fill="#6e6a58" fill-opacity="0.16"/><rect x="18.80" y="0.00" width="3.81" height="4.18" fill="#6e6a58" fill-opacity="0.17"/><rect x="22.56" y="0.00" width="3.81" height="4.18" fill="#6e6a58" fill-opacity="0.34"/><rect x="0.00" y="4.13" width="3.81" height="4.18" fill="#6e6a58" fill-opacity="0.25"/><rect x="3.76" y="4.13" width="3.81" height="4.18" fill="#6e6a58" fill-opacity="0.27"/><rect x="7.52" y="4.13" width="3.81" height="4.18" fill="#6e6a58" fill-opacity="0.34"/><rect x="11.28" y="4.13" width="3.81" height="4.18" fill="#6e6a58" fill-opacity="0.39"/><rect x="15.04" y="4.13" width="3.81" height="4.18" fill="#6e6a58" fill-opacity="0.23"/><rect x="18.80" y="4.13" width="3.81" height="4.18" fill="#6e6a58" fill-opacity="0.29"/><rect x="22.56" y="4.13" width="3.81" height="4.18" fill="#6e6a58" fill-opacity="0.25"/><rect x="0.00" y="8.26" width="3.81" height="4.18" fill="#6e6a58" fill-opacity="0.25"/><rect x="3.76" y="8.26" width="3.81" height="4.18" fill="#6e6a58" fill-opacity="0.32"/><rect x="7.52" y="8.26" width="3.81" height="4.18" fill="#6e6a58" fill-opacity="0.23"/><rect x="11.28" y="8.26" width="3.81" height="4.18" fill="#6e6a58" fill-opacity="0.26"/><rect x="15.04" y="8.26" width="3.81" height="4.18" fill="#6e6a58" fill-opacity="0.24"/><rect x="18.80" y="8.26" width="3.81" height="4.18" fill="#6e6a58" fill-opacity="0.40"/><rect x="22.56" y="8.26" width="3.81" height="4.18" fill="#6e6a58" fill-opacity="0.32"/></svg>
<svg class="a" style="left:581.2px;top:350.90px" width="12.69" height="12.39"><rect x="0.00" y="0.00" width="4.28" height="4.18" fill="#6e6a58" fill-opacity="0.38"/><rect x="4.23" y="0.00" width="4.28" height="4.18" fill="#6e6a58" fill-opacity="0.40"/><rect x="8.46" y="0.00" width="4.28" height="4.18" fill="#6e6a58" fill-opacity="0.17"/><rect x="0.00" y="4.13" width="4.28" height="4.18" fill="#6e6a58" fill-opacity="0.59"/><rect x="4.23" y="4.13" width="4.28" height="4.18" fill="#6e6a58" fill-opacity="0.38"/><rect x="8.46" y="4.13" width="4.28" height="4.18" fill="#6e6a58" fill-opacity="0.46"/><rect x="0.00" y="8.26" width="4.28" height="4.18" fill="#6e6a58" fill-opacity="0.10"/><rect x="4.23" y="8.26" width="4.28" height="4.18" fill="#6e6a58" fill-opacity="0.16"/><rect x="8.46" y="8.26" width="4.28" height="4.18" fill="#6e6a58" fill-opacity="0.10"/></svg>
<div class="a" style="left:505.9px;top:367.20px;width:32.2px;height:3.8px;background:#9a9a80;opacity:.08"></div>
<div class="td" style="left:594px;top:344.60px;height:25.4px;line-height:25.4px;font-size:8px;text-align:left;padding-top:0.3px">口县</div>
<div class="td" style="left:628.2px;top:344.60px;width:62.7px;height:25.4px;line-height:25.4px">11</div>
<div class="td" style="left:690.9px;top:344.60px;width:74.7px;height:25.4px;line-height:25.4px">1</div>
<svg class="a" style="left:793.5px;top:351.00px" width="14" height="12" viewBox="0 0 14 12"><rect x="0.3" y="0" width="12.3" height="10.6" fill="#fff" fill-opacity=".75"/><circle cx="6.2" cy="4.5" r="3.2" fill="none" stroke="#1edfdc" stroke-width="1.6"/><path d="M8.6 6.9L12.4 10.7" stroke="#1edfdc" stroke-width="2" stroke-linecap="round"/></svg>
<div class="a" style="left:446px;top:370.00px;width:387.3px;height:25.40px;background:#dfefdb;border-bottom:1px solid #e0d8c2"></div>
<div class="td" style="left:446px;top:370.00px;width:41.3px;height:25.4px;line-height:25.4px">10</div>
<svg class="a" style="left:511.8px;top:376.30px" width="26.32" height="12.39"><rect x="0.00" y="0.00" width="3.81" height="4.18" fill="#6e6a58" fill-opacity="0.31"/><rect x="3.76" y="0.00" width="3.81" height="4.18" fill="#6e6a58" fill-opacity="0.35"/><rect x="7.52" y="0.00" width="3.81" height="4.18" fill="#6e6a58" fill-opacity="0.38"/><rect x="11.28" y="0.00" width="3.81" height="4.18" fill="#6e6a58" fill-opacity="0.13"/><rect x="15.04" y="0.00" width="3.81" height="4.18" fill="#6e6a58" fill-opacity="0.32"/><rect x="18.80" y="0.00" width="3.81" height="4.18" fill="#6e6a58" fill-opacity="0.30"/><rect x="22.56" y="0.00" width="3.81" height="4.18" fill="#6e6a58" fill-opacity="0.13"/><rect x="0.00" y="4.13" width="3.81" height="4.18" fill="#6e6a58" fill-opacity="0.38"/><rect x="3.76" y="4.13" width="3.81" height="4.18" fill="#6e6a58" fill-opacity="0.41"/><rect x="7.52" y="4.13" width="3.81" height="4.18" fill="#6e6a58" fill-opacity="0.15"/><rect x="11.28" y="4.13" width="3.81" height="4.18" fill="#6e6a58" fill-opacity="0.40"/><rect x="15.04" y="4.13" width="3.81" height="4.18" fill="#6e6a58" fill-opacity="0.22"/><rect x="18.80" y="4.13" width="3.81" height="4.18" fill="#6e6a58" fill-opacity="0.25"/><rect x="22.56" y="4.13" width="3.81" height="4.18" fill="#6e6a58" fill-opacity="0.42"/><rect x="0.00" y="8.26" width="3.81" height="4.18" fill="#6e6a58" fill-opacity="0.36"/><rect x="3.76" y="8.26" width="3.81" height="4.18" fill="#6e6a58" fill-opacity="0.13"/><rect x="7.52" y="8.26" width="3.81" height="4.18" fill="#6e6a58" fill-opacity="0.23"/><rect x="11.28" y="8.26" width="3.81" height="4.18" fill="#6e6a58" fill-opacity="0.26"/><rect x="15.04" y="8.26" width="3.81" height="4.18" fill="#6e6a58" fill-opacity="0.20"/><rect x="18.80" y="8.26" width="3.81" height="4.18" fill="#6e6a58" fill-opacity="0.15"/><rect x="22.56" y="8.26" width="3.81" height="4.18" fill="#6e6a58" fill-opacity="0.19"/></svg>
<svg class="a" style="left:581.2px;top:376.30px" width="12.69" height="12.39"><rect x="0.00" y="0.00" width="4.28" height="4.18" fill="#6e6a58" fill-opacity="0.33"/><rect x="4.23" y="0.00" width="4.28" height="4.18" fill="#6e6a58" fill-opacity="0.09"/><rect x="8.46" y="0.00" width="4.28" height="4.18" fill="#6e6a58" fill-opacity="0.27"/><rect x="0.00" y="4.13" width="4.28" height="4.18" fill="#6e6a58" fill-opacity="0.35"/><rect x="4.23" y="4.13" width="4.28" height="4.18" fill="#6e6a58" fill-opacity="0.51"/><rect x="8.46" y="4.13" width="4.28" height="4.18" fill="#6e6a58" fill-opacity="0.37"/><rect x="0.00" y="8.26" width="4.28" height="4.18" fill="#6e6a58" fill-opacity="0.41"/><rect x="4.23" y="8.26" width="4.28" height="4.18" fill="#6e6a58" fill-opacity="0.35"/><rect x="8.46" y="8.26" width="4.28" height="4.18" fill="#6e6a58" fill-opacity="0.41"/></svg>
<div class="a" style="left:505.9px;top:392.60px;width:32.2px;height:3.8px;background:#9a9a80;opacity:.08"></div>
<div class="td" style="left:594px;top:370.00px;height:25.4px;line-height:25.4px;font-size:8px;text-align:left;padding-top:0.3px">山市</div>
<div class="td" style="left:628.2px;top:370.00px;width:62.7px;height:25.4px;line-height:25.4px">45</div>
<div class="td" style="left:690.9px;top:370.00px;width:74.7px;height:25.4px;line-height:25.4px">5</div>
<svg class="a" style="left:793.5px;top:376.40px" width="14" height="12" viewBox="0 0 14 12"><rect x="0.3" y="0" width="12.3" height="10.6" fill="#fff" fill-opacity=".75"/><circle cx="6.2" cy="4.5" r="3.2" fill="none" stroke="#1edfdc" stroke-width="1.6"/><path d="M8.6 6.9L12.4 10.7" stroke="#1edfdc" stroke-width="2" stroke-linecap="round"/></svg>
<div class="a" style="left:446px;top:395.40px;width:387.3px;height:25.40px;background:#fdf6d5;border-bottom:1px solid #e0d8c2"></div>
<div class="td" style="left:446px;top:395.40px;width:41.3px;height:25.4px;line-height:25.4px">11</div>
<svg class="a" style="left:511.8px;top:401.70px" width="26.32" height="12.39"><rect x="0.00" y="0.00" width="3.81" height="4.18" fill="#6e6a58" fill-opacity="0.12"/><rect x="3.76" y="0.00" width="3.81" height="4.18" fill="#6e6a58" fill-opacity="0.17"/><rect x="7.52" y="0.00" width="3.81" height="4.18" fill="#6e6a58" fill-opacity="0.09"/><rect x="11.28" y="0.00" width="3.81" height="4.18" fill="#6e6a58" fill-opacity="0.34"/><rect x="15.04" y="0.00" width="3.81" height="4.18" fill="#6e6a58" fill-opacity="0.17"/><rect x="18.80" y="0.00" width="3.81" height="4.18" fill="#6e6a58" fill-opacity="0.12"/><rect x="22.56" y="0.00" width="3.81" height="4.18" fill="#6e6a58" fill-opacity="0.22"/><rect x="0.00" y="4.13" width="3.81" height="4.18" fill="#6e6a58" fill-opacity="0.39"/><rect x="3.76" y="4.13" width="3.81" height="4.18" fill="#6e6a58" fill-opacity="0.36"/><rect x="7.52" y="4.13" width="3.81" height="4.18" fill="#6e6a58" fill-opacity="0.17"/><rect x="11.28" y="4.13" width="3.81" height="4.18" fill="#6e6a58" fill-opacity="0.13"/><rect x="15.04" y="4.13" width="3.81" height="4.18" fill="#6e6a58" fill-opacity="0.39"/><rect x="18.80" y="4.13" width="3.81" height="4.18" fill="#6e6a58" fill-opacity="0.27"/><rect x="22.56" y="4.13" width="3.81" height="4.18" fill="#6e6a58" fill-opacity="0.32"/><rect x="0.00" y="8.26" width="3.81" height="4.18" fill="#6e6a58" fill-opacity="0.11"/><rect x="3.76" y="8.26" width="3.81" height="4.18" fill="#6e6a58" fill-opacity="0.10"/><rect x="7.52" y="8.26" width="3.81" height="4.18" fill="#6e6a58" fill-opacity="0.31"/><rect x="11.28" y="8.26" width="3.81" height="4.18" fill="#6e6a58" fill-opacity="0.22"/><rect x="15.04" y="8.26" width="3.81" height="4.18" fill="#6e6a58" fill-opacity="0.10"/><rect x="18.80" y="8.26" width="3.81" height="4.18" fill="#6e6a58" fill-opacity="0.40"/><rect x="22.56" y="8.26" width="3.81" height="4.18" fill="#6e6a58" fill-opacity="0.30"/></svg>
<svg class="a" style="left:581.2px;top:401.70px" width="12.69" height="12.39"><rect x="0.00" y="0.00" width="4.28" height="4.18" fill="#6e6a58" fill-opacity="0.35"/><rect x="4.23" y="0.00" width="4.28" height="4.18" fill="#6e6a58" fill-opacity="0.11"/><rect x="8.46" y="0.00" width="4.28" height="4.18" fill="#6e6a58" fill-opacity="0.37"/><rect x="0.00" y="4.13" width="4.28" height="4.18" fill="#6e6a58" fill-opacity="0.57"/><rect x="4.23" y="4.13" width="4.28" height="4.18" fill="#6e6a58" fill-opacity="0.43"/><rect x="8.46" y="4.13" width="4.28" height="4.18" fill="#6e6a58" fill-opacity="0.58"/><rect x="0.00" y="8.26" width="4.28" height="4.18" fill="#6e6a58" fill-opacity="0.17"/><rect x="4.23" y="8.26" width="4.28" height="4.18" fill="#6e6a58" fill-opacity="0.12"/><rect x="8.46" y="8.26" width="4.28" height="4.18" fill="#6e6a58" fill-opacity="0.26"/></svg>
<div class="a" style="left:505.9px;top:418.00px;width:32.2px;height:3.8px;background:#9a9a80;opacity:.08"></div>
<div class="td" style="left:594px;top:395.40px;height:25.4px;line-height:25.4px;font-size:8px;text-align:left;padding-top:0.3px">昌市</div>
<div class="td" style="left:628.2px;top:395.40px;width:62.7px;height:25.4px;line-height:25.4px">0</div>
<div class="td" style="left:690.9px;top:395.40px;width:74.7px;height:25.4px;line-height:25.4px">0</div>
<svg class="a" style="left:793.5px;top:401.80px" width="14" height="12" viewBox="0 0 14 12"><rect x="0.3" y="0" width="12.3" height="10.6" fill="#fff" fill-opacity=".75"/><circle cx="6.2" cy="4.5" r="3.2" fill="none" stroke="#1edfdc" stroke-width="1.6"/><path d="M8.6 6.9L12.4 10.7" stroke="#1edfdc" stroke-width="2" stroke-linecap="round"/></svg>
<div class="a" style="left:446px;top:420.80px;width:387.3px;height:25.40px;background:#dfefdb;border-bottom:1px solid #e0d8c2"></div>
<div class="td" style="left:446px;top:420.80px;width:41.3px;height:25.4px;line-height:25.4px">12</div>
<svg class="a" style="left:511.8px;top:427.10px" width="26.32" height="12.39"><rect x="0.00" y="0.00" width="3.81" height="4.18" fill="#6e6a58" fill-opacity="0.16"/><rect x="3.76" y="0.00" width="3.81" height="4.18" fill="#6e6a58" fill-opacity="0.12"/><rect x="7.52" y="0.00" width="3.81" height="4.18" fill="#6e6a58" fill-opacity="0.13"/><rect x="11.28" y="0.00" width="3.81" height="4.18" fill="#6e6a58" fill-opacity="0.10"/><rect x="15.04" y="0.00" width="3.81" height="4.18" fill="#6e6a58" fill-opacity="0.15"/><rect x="18.80" y="0.00" width="3.81" height="4.18" fill="#6e6a58" fill-opacity="0.19"/><rect x="22.56" y="0.00" width="3.81" height="4.18" fill="#6e6a58" fill-opacity="0.18"/><rect x="0.00" y="4.13" width="3.81" height="4.18" fill="#6e6a58" fill-opacity="0.34"/><rect x="3.76" y="4.13" width="3.81" height="4.18" fill="#6e6a58" fill-opacity="0.18"/><rect x="7.52" y="4.13" width="3.81" height="4.18" fill="#6e6a58" fill-opacity="0.25"/><rect x="11.28" y="4.13" width="3.81" height="4.18" fill="#6e6a58" fill-opacity="0.14"/><rect x="15.04" y="4.13" width="3.81" height="4.18" fill="#6e6a58" fill-opacity="0.20"/><rect x="18.80" y="4.13" width="3.81" height="4.18" fill="#6e6a58" fill-opacity="0.09"/><rect x="22.56" y="4.13" width="3.81" height="4.18" fill="#6e6a58" fill-opacity="0.17"/><rect x="0.00" y="8.26" width="3.81" height="4.18" fill="#6e6a58" fill-opacity="0.09"/><rect x="3.76" y="8.26" width="3.81" height="4.18" fill="#6e6a58" fill-opacity="0.33"/><rect x="7.52" y="8.26" width="3.81" height="4.18" fill="#6e6a58" fill-opacity="0.27"/><rect x="11.28" y="8.26" width="3.81" height="4.18" fill="#6e6a58" fill-opacity="0.14"/><rect x="15.04" y="8.26" width="3.81" height="4.18" fill="#6e6a58" fill-opacity="0.24"/><rect x="18.80" y="8.26" width="3.81" height="4.18" fill="#6e6a58" fill-opacity="0.40"/><rect x="22.56" y="8.26" width="3.81" height="4.18" fill="#6e6a58" fill-opacity="0.12"/></svg>
<svg class="a" style="left:581.2px;top:427.10px" width="12.69" height="12.39"><rect x="0.00" y="0.00" width="4.28" height="4.18" fill="#6e6a58" fill-opacity="0.36"/><rect x="4.23" y="0.00" width="4.28" height="4.18" fill="#6e6a58" fill-opacity="0.23"/><rect x="8.46" y="0.00" width="4.28" height="4.18" fill="#6e6a58" fill-opacity="0.25"/><rect x="0.00" y="4.13" width="4.28" height="4.18" fill="#6e6a58" fill-opacity="0.45"/><rect x="4.23" y="4.13" width="4.28" height="4.18" fill="#6e6a58" fill-opacity="0.52"/><rect x="8.46" y="4.13" width="4.28" height="4.18" fill="#6e6a58" fill-opacity="0.44"/><rect x="0.00" y="8.26" width="4.28" height="4.18" fill="#6e6a58" fill-opacity="0.36"/><rect x="4.23" y="8.26" width="4.28" height="4.18" fill="#6e6a58" fill-opacity="0.32"/><rect x="8.46" y="8.26" width="4.28" height="4.18" fill="#6e6a58" fill-opacity="0.30"/></svg>
<div class="a" style="left:505.9px;top:443.40px;width:32.2px;height:3.8px;background:#9a9a80;opacity:.08"></div>
<div class="td" style="left:594px;top:420.80px;height:25.4px;line-height:25.4px;font-size:8px;text-align:left;padding-top:0.3px">江县</div>
<div class="td" style="left:628.2px;top:420.80px;width:62.7px;height:25.4px;line-height:25.4px">0</div>
<div class="td" style="left:690.9px;top:420.80px;width:74.7px;height:25.4px;line-height:25.4px">0</div>
<svg class="a" style="left:793.5px;top:427.20px" width="14" height="12" viewBox="0 0 14 12"><rect x="0.3" y="0" width="12.3" height="10.6" fill="#fff" fill-opacity=".75"/><circle cx="6.2" cy="4.5" r="3.2" fill="none" stroke="#1edfdc" stroke-width="1.6"/><path d="M8.6 6.9L12.4 10.7" stroke="#1edfdc" stroke-width="2" stroke-linecap="round"/></svg>
<div class="a" style="left:446px;top:446.20px;width:387.3px;height:24.90px;background:#fdf6d5;border-bottom:1px solid #e0d8c2"></div>
<div class="td" style="left:446px;top:446.20px;width:41.3px;height:25.4px;line-height:25.4px">13</div>
<svg class="a" style="left:511.8px;top:452.50px" width="26.32" height="12.39"><rect x="0.00" y="0.00" width="3.81" height="4.18" fill="#6e6a58" fill-opacity="0.22"/><rect x="3.76" y="0.00" width="3.81" height="4.18" fill="#6e6a58" fill-opacity="0.20"/><rect x="7.52" y="0.00" width="3.81" height="4.18" fill="#6e6a58" fill-opacity="0.10"/><rect x="11.28" y="0.00" width="3.81" height="4.18" fill="#6e6a58" fill-opacity="0.12"/><rect x="15.04" y="0.00" width="3.81" height="4.18" fill="#6e6a58" fill-opacity="0.10"/><rect x="18.80" y="0.00" width="3.81" height="4.18" fill="#6e6a58" fill-opacity="0.33"/><rect x="22.56" y="0.00" width="3.81" height="4.18" fill="#6e6a58" fill-opacity="0.17"/><rect x="0.00" y="4.13" width="3.81" height="4.18" fill="#6e6a58" fill-opacity="0.14"/><rect x="3.76" y="4.13" width="3.81" height="4.18" fill="#6e6a58" fill-opacity="0.11"/><rect x="7.52" y="4.13" width="3.81" height="4.18" fill="#6e6a58" fill-opacity="0.37"/><rect x="11.28" y="4.13" width="3.81" height="4.18" fill="#6e6a58" fill-opacity="0.38"/><rect x="15.04" y="4.13" width="3.81" height="4.18" fill="#6e6a58" fill-opacity="0.31"/><rect x="18.80" y="4.13" width="3.81" height="4.18" fill="#6e6a58" fill-opacity="0.18"/><rect x="22.56" y="4.13" width="3.81" height="4.18" fill="#6e6a58" fill-opacity="0.16"/><rect x="0.00" y="8.26" width="3.81" height="4.18" fill="#6e6a58" fill-opacity="0.18"/><rect x="3.76" y="8.26" width="3.81" height="4.18" fill="#6e6a58" fill-opacity="0.24"/><rect x="7.52" y="8.26" width="3.81" height="4.18" fill="#6e6a58" fill-opacity="0.13"/><rect x="11.28" y="8.26" width="3.81" height="4.18" fill="#6e6a58" fill-opacity="0.23"/><rect x="15.04" y="8.26" width="3.81" height="4.18" fill="#6e6a58" fill-opacity="0.17"/><rect x="18.80" y="8.26" width="3.81" height="4.18" fill="#6e6a58" fill-opacity="0.41"/><rect x="22.56" y="8.26" width="3.81" height="4.18" fill="#6e6a58" fill-opacity="0.41"/></svg>
<svg class="a" style="left:581.2px;top:452.50px" width="12.69" height="12.39"><rect x="0.00" y="0.00" width="4.28" height="4.18" fill="#6e6a58" fill-opacity="0.27"/><rect x="4.23" y="0.00" width="4.28" height="4.18" fill="#6e6a58" fill-opacity="0.16"/><rect x="8.46" y="0.00" width="4.28" height="4.18" fill="#6e6a58" fill-opacity="0.41"/><rect x="0.00" y="4.13" width="4.28" height="4.18" fill="#6e6a58" fill-opacity="0.44"/><rect x="4.23" y="4.13" width="4.28" height="4.18" fill="#6e6a58" fill-opacity="0.45"/><rect x="8.46" y="4.13" width="4.28" height="4.18" fill="#6e6a58" fill-opacity="0.48"/><rect x="0.00" y="8.26" width="4.28" height="4.18" fill="#6e6a58" fill-opacity="0.15"/><rect x="4.23" y="8.26" width="4.28" height="4.18" fill="#6e6a58" fill-opacity="0.25"/><rect x="8.46" y="8.26" width="4.28" height="4.18" fill="#6e6a58" fill-opacity="0.08"/></svg>
<div class="a" style="left:505.9px;top:468.80px;width:32.2px;height:3.8px;background:#9a9a80;opacity:.08"></div>
<div class="td" style="left:594px;top:446.20px;height:25.4px;line-height:25.4px;font-size:8px;text-align:left;padding-top:0.3px">阳区</div>
<div class="td" style="left:628.2px;top:446.20px;width:62.7px;height:25.4px;line-height:25.4px">5</div>
<div class="td" style="left:690.9px;top:446.20px;width:74.7px;height:25.4px;line-height:25.4px">0</div>
<svg class="a" style="left:793.5px;top:452.60px" width="14" height="12" viewBox="0 0 14 12"><rect x="0.3" y="0" width="12.3" height="10.6" fill="#fff" fill-opacity=".75"/><circle cx="6.2" cy="4.5" r="3.2" fill="none" stroke="#1edfdc" stroke-width="1.6"/><path d="M8.6 6.9L12.4 10.7" stroke="#1edfdc" stroke-width="2" stroke-linecap="round"/></svg>
<div class="a" style="left:505.9px;top:139.9px;width:32.2px;height:3.9px;background:#a8d8d8"></div>
<div class="a" style="left:581.2px;top:139.9px;width:12.7px;height:3.9px;background:#a8d8d8"></div>
<div class="a" style="left:445.5px;top:140.6px;width:1px;height:330.5px;background:#d4d4cc"></div>
<div class="a" style="left:486.8px;top:140.6px;width:1px;height:330.5px;background:#d4d4cc"></div>
<div class="a" style="left:562.9px;top:140.6px;width:1px;height:330.5px;background:#d4d4cc"></div>
<div class="a" style="left:627.7px;top:140.6px;width:1px;height:330.5px;background:#d4d4cc"></div>
<div class="a" style="left:690.4px;top:140.6px;width:1px;height:330.5px;background:#d4d4cc"></div>
<div class="a" style="left:765.1px;top:140.6px;width:1px;height:330.5px;background:#d4d4cc"></div>
<div class="a" style="left:832.8px;top:140.6px;width:1px;height:330.5px;background:#d4d4cc"></div>
<div class="a" id="dd">
 <div class="a" style="left:0;top:0;width:69.2px;height:77px;background:#fff;border:1px solid #d0d0d0;border-top:none"></div>
 <div class="a" style="left:0;top:18.6px;width:69.2px;height:1px;background:#d8d8d8"></div>
 <div class="a" style="left:0;top:35.6px;width:69.2px;height:19.2px;background:#2f7bb9"></div>
 <div class="a" style="left:0;top:57.2px;width:69.2px;height:1px;background:#d0d0d0"></div>
 <div class="ddi" style="top:2.8px">积水历史原因</div>
 <div class="ddi" style="top:21.1px">积水历史详情</div>
 <div class="ddi" style="top:38.9px;color:#fff">积水历史统计</div>
 <div class="ddi" style="top:59.8px">积水曲线分析</div>
</div>
</body>
</html>
